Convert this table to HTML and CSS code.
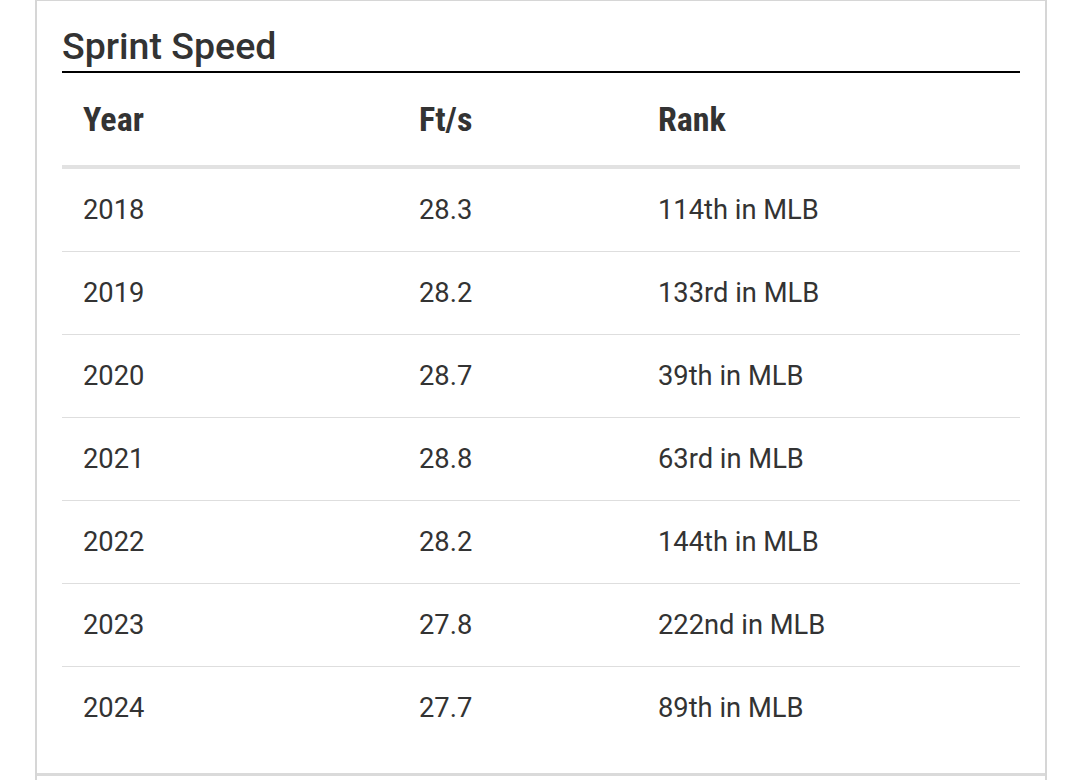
FILE: index.html
```html
<!DOCTYPE html>
<html>
<head>
<meta charset="utf-8">
<link rel="stylesheet" href="styles.css">
</head>
<body>
<div class="card">
  <h2 class="title">Sprint Speed</h2>
  <table class="speed">
    <thead>
      <tr><th class="c1">Year</th><th class="c2">Ft/s</th><th class="c3">Rank</th></tr>
    </thead>
    <tbody>
      <tr><td>2018</td><td>28.3</td><td>114th in MLB</td></tr>
      <tr><td>2019</td><td>28.2</td><td>133rd in MLB</td></tr>
      <tr><td>2020</td><td>28.7</td><td>39th in MLB</td></tr>
      <tr><td>2021</td><td>28.8</td><td>63rd in MLB</td></tr>
      <tr><td>2022</td><td>28.2</td><td>144th in MLB</td></tr>
      <tr><td>2023</td><td>27.8</td><td>222nd in MLB</td></tr>
      <tr><td>2024</td><td>27.7</td><td>89th in MLB</td></tr>
    </tbody>
  </table>
  <div class="card-foot"></div>
</div>
</body>
</html>
```

FILE: styles.css
```css
html, body {
  margin: 0;
  padding: 0;
  background: #fff;
}
body {
  font-family: Roboto, "Liberation Sans", sans-serif;
  color: #333;
}
.card {
  margin-left: 35px;
  border-left: 2px solid #d6d6d6;
  border-right: 2px solid #d6d6d6;
  border-top: 1px solid #d6d6d6;
  padding: 0 25px;
  box-sizing: content-box;
  width: 958px;
}
.title {
  margin: 0;
  padding-top: 24px;
  height: 46px;
  font-size: 37.5px;
  line-height: 42px;
  font-weight: 500;
  color: #333;
  border-bottom: 2px solid #000;
  box-sizing: content-box;
}
.speed {
  width: 100%;
  border-collapse: collapse;
}
.speed th {
  text-align: left;
  font-weight: 700;
  font-size: 34px;
  font-stretch: condensed;
  height: 94px;
  padding: 0 0 0 21px;
  border-bottom: 4px solid #e2e2e2;
  box-sizing: border-box;
}
.speed .c1 { width: 336px; }
.speed .c2 { width: 239px; }
.speed td {
  font-size: 27.3px;
  height: 82px;
  padding: 0 0 0 21px;
  border-bottom: 1px solid #dedede;
}
.speed tbody tr:last-child td {
  border-bottom: none;
}
.card-foot {
  margin: 24px -25px 0;
  height: 20px;
  border-top: 3px solid #dadada;
}
```
